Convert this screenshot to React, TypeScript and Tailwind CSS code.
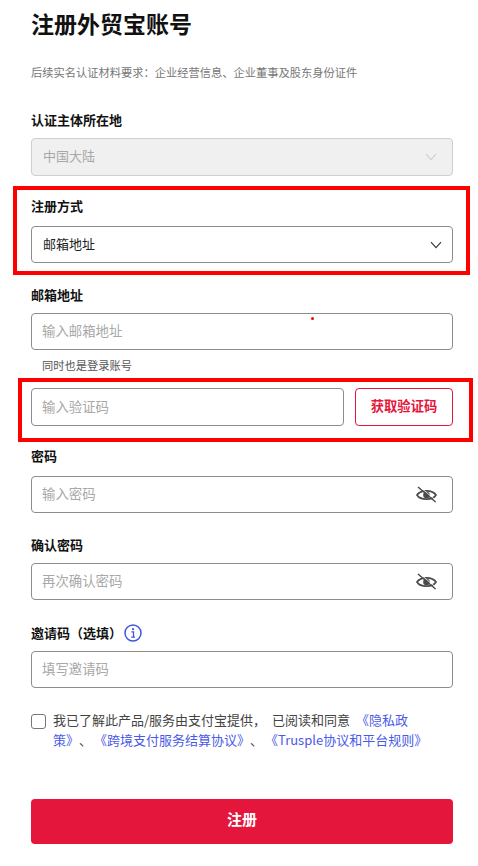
import React from "react";

const font = { fontFamily: '"Noto Sans CJK SC", "Liberation Sans", sans-serif' };

function Chevron({ color }: { color: string }) {
  return (
    <svg width="12" height="8" viewBox="0 0 12 8" fill="none">
      <path d="M1 1.2 L6 6.6 L11 1.2" stroke={color} strokeWidth="1.1" />
    </svg>
  );
}

function EyeOff() {
  return (
    <svg width="21" height="17" viewBox="0 0 21 17" fill="none">
      <path d="M1 9 C4.5 3.4 16.5 3.4 20 9 C16.5 14.6 4.5 14.6 1 9 Z" stroke="#4a4a4a" strokeWidth="1.7" />
      <circle cx="10.5" cy="9" r="3.3" fill="#4a4a4a" />
      <path d="M2 1 L19.6 16" stroke="#4a4a4a" strokeWidth="1.5" />
      <path d="M3.6 0.6 L20.6 15" stroke="#fff" strokeWidth="0.8" />
    </svg>
  );
}

function Info() {
  return (
    <svg width="18" height="18" viewBox="0 0 18 18" fill="none">
      <circle cx="9" cy="9" r="8" stroke="#3f57e0" strokeWidth="1.5" />
      <circle cx="9" cy="5.2" r="1.1" fill="#3f57e0" />
      <path d="M7.4 7.8 H9.5 V13 M7.2 13.2 H11" stroke="#3f57e0" strokeWidth="1.3" />
    </svg>
  );
}

function Label({ children }: { children: React.ReactNode }) {
  return <div className="h-[20px] text-[13px] leading-[20px] font-bold text-[#111]">{children}</div>;
}

function TextBox({ placeholder, eye }: { placeholder: string; eye?: boolean }) {
  return (
    <div className="flex h-[37px] items-center justify-between rounded-[4px] border border-[#8c8c8c] pl-[10px] pr-[15px]">
      <span className="pb-[3px] text-[13.4px] leading-[20px] text-[#a8a8a8]">{placeholder}</span>
      {eye && <EyeOff />}
    </div>
  );
}

export default function App() {
  return (
    <div className="relative h-[866px] w-[478px] overflow-hidden bg-white pl-[31px] pr-[25px]" style={font}>
      <h1 className="pt-[7px] text-[23px] leading-[32px] font-bold text-[#111]">注册外贸宝账号</h1>
      <p className="mt-[24px] text-[11.25px] leading-[18px] text-[#777]">{"后续实名认证材料要求\uFF1A企业经营信息\u3001企业董事及股东身份证件"}</p>

      <div className="mt-[29px]"><Label>认证主体所在地</Label></div>
      <div className="mt-[8px] flex h-[38px] items-center justify-between rounded-[4px] border border-[#cfcfcf] bg-[#f0f0f0] pl-[11px] pr-[15px]">
        <span className="pb-[3px] text-[13px] leading-[20px] text-[#a8a8a8]">中国大陆</span>
        <Chevron color="#cfcfcf" />
      </div>

      <div className="mt-[20px]"><Label>注册方式</Label></div>
      <div className="mt-[10px] flex h-[37px] items-center justify-between rounded-[4px] border border-[#8c8c8c] pl-[11px] pr-[10px]">
        <span className="pb-[2px] text-[13px] leading-[20px] text-[#222]">邮箱地址</span>
        <Chevron color="#333" />
      </div>

      <div className="mt-[22px]"><Label>邮箱地址</Label></div>
      <div className="mt-[8px]"><TextBox placeholder="输入邮箱地址" /></div>
      <p className="mt-[6px] pl-[11px] text-[11.25px] leading-[18px] text-[#555]">同时也是登录账号</p>

      <div className="mt-[14px] flex h-[38px] gap-[11px]">
        <div className="flex-1"><div className="flex h-[38px] items-center rounded-[4px] border border-[#8c8c8c] pl-[10px]"><span className="pb-[2px] text-[13.4px] leading-[20px] text-[#a8a8a8]">输入验证码</span></div></div>
        <div className="flex w-[98px] items-center justify-center rounded-[4px] border border-[#e5163b] pb-[2px] text-[13.3px] leading-[20px] font-bold text-[#e5163b]">获取验证码</div>
      </div>

      <div className="mt-[20px]"><Label>密码</Label></div>
      <div className="mt-[10px]"><TextBox placeholder="输入密码" eye /></div>

      <div className="mt-[22px]"><Label>确认密码</Label></div>
      <div className="mt-[8px]"><TextBox placeholder="再次确认密码" eye /></div>

      <div className="mt-[23px] flex h-[20px] items-center gap-[2px]">
        <Label>{"邀请码\uFF08选填\uFF09"}</Label>
        <Info />
      </div>
      <div className="mt-[8px]"><TextBox placeholder="填写邀请码" /></div>

      <div className="mt-[22px] flex gap-[7px]">
        <div className="mt-[4px] h-[15px] w-[15px] shrink-0 rounded-[3px] border border-[#777]" />
        <p className="text-[13px] leading-[20px] text-[#444] [text-spacing-trim:space-all]">
          {"我已了解此产品/服务由支付宝提供\uFF0C "}
          <span className="ml-[3px]">已阅读和同意</span>{" "}
          <span className="ml-[3px] text-[#4a5ae8]">{"《隐私政"}<br />{"策》"}</span>
          <span className="mr-[2px]">{"\u3001"}</span>
          <span className="text-[#4a5ae8]">《跨境支付服务结算协议》</span>
          <span className="mr-[2px]">{"\u3001"}</span>
          <span className="text-[#4a5ae8]">《Trusple协议和平台规则》</span>
        </p>
      </div>

      <div className="mt-[49px] flex h-[45px] items-center justify-center rounded-[4px] bg-[#e5163b] pb-[4px] text-[15px] font-bold text-white">注册</div>

      <div className="absolute left-[13px] top-[186px] h-[89px] w-[457px] border-4 border-[#ff0000]" />
      <div className="absolute left-[18px] top-[378px] h-[64px] w-[455px] border-4 border-[#ff0000]" />
      <div className="absolute left-[311px] top-[317px] h-[3px] w-[3px] rounded-full bg-[#ff0000]" />
    </div>
  );
}
